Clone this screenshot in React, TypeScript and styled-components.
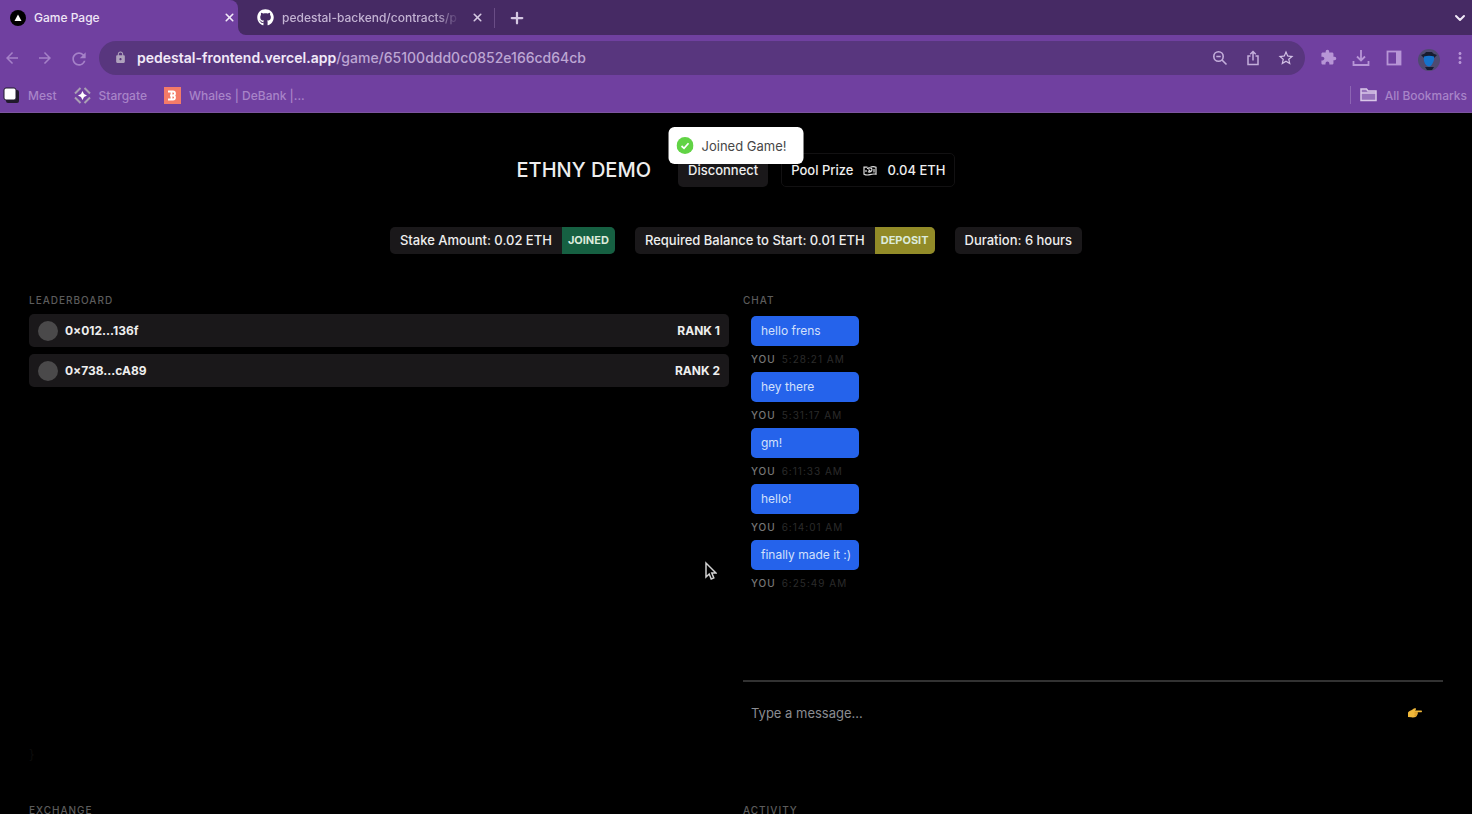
import React from "react";
import styled, { createGlobalStyle, css } from "styled-components";
import { LuChevronDown, LuPlus, LuX } from "react-icons/lu";
import {
  MdArrowBack,
  MdArrowForward,
  MdRefresh,
  MdLock,
  MdExtension,
  MdStarBorder,
  MdMoreVert,
} from "react-icons/md";
import { FaGithub } from "react-icons/fa";

const GlobalStyle = createGlobalStyle`
  *, *::before, *::after { box-sizing: border-box; }
  body {
    margin: 0;
    background: #000;
    color: #eee;
    font-family: Inter, "Liberation Sans", sans-serif;
    font-size: 13px;
  }
  button, input { font: inherit; color: inherit; }
  h1, h2, p, ol, ul { margin: 0; padding: 0; }
  ol, ul { list-style: none; }
`;

const Window = styled.div`
  display: flex;
  flex-direction: column;
  height: 100vh;
  overflow: hidden;
`;

/* Browser frame */

const TabStrip = styled.div`
  display: flex;
  align-items: stretch;
  height: 35px;
  background: #462a64;
`;

const Tab = styled.div<{ $active?: boolean }>`
  display: flex;
  align-items: center;
  gap: 8px;
  width: ${(p) => (p.$active ? 238 : 256)}px;
  padding: ${(p) => (p.$active ? "0 0 0 10px" : "0 8px 0 19px")};
  background: ${(p) => (p.$active ? "#7040a0" : "#462a64")};
  border-radius: ${(p) => (p.$active ? "0 8px 0 0" : "0 0 0 8px")};
  color: ${(p) => (p.$active ? "#efe6f6" : "#c3b3d3")};
  font-size: 12px;
  font-weight: 500;
`;

const TabCorner = styled.div`
  display: flex;
  background: #7040a0;
`;

const TabTitle = styled.span<{ $fade?: boolean }>`
  flex: 1;
  white-space: nowrap;
  ${(p) =>
    p.$fade &&
    css`
      mask-image: linear-gradient(to right, #000 86%, transparent);
    `}
`;

const IconButton = styled.button<{ $tone?: string }>`
  display: grid;
  place-items: center;
  flex: none;
  width: 18px;
  height: 18px;
  padding: 0;
  border: 0;
  background: none;
  color: ${(p) => p.$tone ?? "#b795d6"};
`;

const StripDivider = styled.span`
  align-self: center;
  width: 1px;
  height: 20px;
  margin-right: 13px;
  background: #6a4d86;
`;

const StripSpacer = styled.span`
  flex: 1;
`;

const StripEnd = styled.div`
  display: flex;
  align-items: center;
  padding-right: 3px;
`;

const Toolbar = styled.div`
  display: flex;
  align-items: center;
  gap: 12px;
  height: 45px;
  padding: 0 3px;
  background: #7040a0;
`;

const ToolGroup = styled.div`
  display: flex;
  align-items: center;
  gap: 15px;
`;

const AddressBar = styled.div`
  display: flex;
  align-items: center;
  flex: 1;
  min-width: 0;
  height: 34px;
  margin-right: 2px;
  padding: 0 10px 0 12px;
  border-radius: 17px;
  background: #58367e;
`;

const Address = styled.div`
  flex: 1;
  min-width: 0;
  overflow: hidden;
  padding-left: 8px;
  color: #bda6d3;
  font-size: 14px;
  font-weight: 500;
  white-space: nowrap;
`;

const Host = styled.span`
  color: #f1e9f8;
  font-weight: 600;
`;

const BookmarkBar = styled.nav`
  display: flex;
  align-items: center;
  gap: 17px;
  height: 33px;
  padding: 0 5px 2px 3px;
  border-bottom: 1px solid #7c559f;
  background: #7040a0;
`;

const Bookmark = styled.a`
  display: flex;
  align-items: center;
  gap: 8px;
  color: #a884c8;
  font-size: 12px;
  font-weight: 500;
  text-decoration: none;
`;

const BookmarkDivider = styled.span`
  width: 1px;
  height: 18px;
  margin-left: auto;
  margin-right: -8px;
  background: #8d65b3;
`;

/* Game page */

const Page = styled.main`
  flex: 1;
  min-height: 0;
  padding: 40px 29px 0;
  background: #000;
`;

const Header = styled.header`
  display: flex;
  align-items: center;
  justify-content: center;
  height: 34px;
`;

const Title = styled.h1`
  margin-right: 27px;
  font-size: 20px;
  font-weight: 500;
`;

const Disconnect = styled.button`
  height: 34px;
  margin-right: 13px;
  padding: 0 10px;
  border: 0;
  border-radius: 5px;
  background: #1a181a;
  font-weight: 500;
`;

const PoolPrize = styled.div`
  display: flex;
  align-items: center;
  gap: 10px;
  height: 34px;
  padding: 0 9px;
  border: 1px solid #121112;
  border-radius: 5px;
  font-weight: 500;
`;

const Facts = styled.div`
  display: flex;
  justify-content: center;
  gap: 20px;
  margin-top: 40px;
`;

const Fact = styled.div`
  display: flex;
  height: 27px;
  border-radius: 5px;
  background: #1a181a;
  line-height: 27px;
  font-weight: 500;
  overflow: hidden;
`;

const FactText = styled.span`
  padding: 0 10px;
`;

const FactAction = styled.button<{ $color: string }>`
  padding: 0 6px;
  border: 0;
  background: ${(p) => p.$color};
  color: #dcebdc;
  font-size: 11px;
  font-weight: 700;
`;

const Columns = styled.div`
  display: grid;
  grid-template-columns: 1fr 1fr;
  column-gap: 14px;
`;

const MainColumns = styled(Columns)`
  height: 510px;
  margin-top: 38px;
`;

const Panel = styled.section`
  display: flex;
  flex-direction: column;
`;

const PanelTitle = styled.h2`
  height: 16px;
  color: #5c5c5c;
  font-size: 10px;
  font-weight: 500;
  line-height: 16px;
  letter-spacing: 1px;
`;

const Ranking = styled.ol`
  display: grid;
  gap: 7px;
  margin-top: 6px;
`;

const Player = styled.li`
  display: flex;
  align-items: center;
  gap: 7px;
  height: 33px;
  padding: 0 9px;
  border-radius: 5px;
  background: #1a181a;
  font-size: 12px;
  font-weight: 700;
`;

const Avatar = styled.span`
  width: 20px;
  height: 20px;
  border-radius: 50%;
  background: #4a494a;
`;

const Rank = styled.span`
  margin-left: auto;
`;

const Stray = styled.p`
  margin-top: auto;
  padding-bottom: 40px;
  color: #0c0c0c;
`;

const Messages = styled.ul`
  display: flex;
  flex-direction: column;
  align-self: flex-start;
  height: 372px;
  padding: 8px 8px 0;
`;

const Bubble = styled.p`
  height: 30px;
  padding: 0 8px 0 10px;
  border-radius: 5px;
  background: #2563eb;
  color: #d3e0fb;
  font-size: 12px;
  line-height: 30px;
`;

const Meta = styled.p`
  display: flex;
  gap: 6px;
  height: 26px;
  color: #2b2b2b;
  font-size: 10px;
  line-height: 26px;
  letter-spacing: 1px;
`;

const Author = styled.span`
  color: #777;
  font-weight: 500;
`;

const Composer = styled.form`
  display: flex;
  align-items: center;
  height: 64px;
  padding: 0 19px 0 8px;
  border-top: 2px solid #323232;
`;

const MessageInput = styled.input`
  flex: 1;
  min-width: 0;
  padding: 0;
  border: 0;
  outline: 0;
  background: none;
  &::placeholder {
    color: #8a8c91;
    opacity: 1;
  }
`;

const Toast = styled.div`
  position: fixed;
  top: 127px;
  left: 50%;
  display: flex;
  align-items: center;
  gap: 8px;
  height: 37px;
  padding: 0 17px 0 8px;
  border-radius: 6px;
  background: #fff;
  color: #474747;
  transform: translateX(-50%);
`;

const Pointer = styled.svg`
  position: absolute;
  top: 561px;
  left: 703px;
`;

const stroke = { fill: "none", stroke: "currentColor" } as const;

const VercelIcon = () => (
  <svg width="16" height="16" viewBox="0 0 16 16">
    <circle cx="8" cy="8" r="8" fill="#000" />
    <path d="M8 4.500 11.500 11h-7z" fill="#fff" />
  </svg>
);

const MestIcon = () => (
  <svg width="17" height="17" viewBox="0 0 17 17">
    <rect x="3" y="3" width="13" height="13" rx="2" fill="#211a2c" />
    <rect x="1" y="1" width="12" height="12" rx="2" fill="#fff" stroke="#211a2c" />
  </svg>
);

const StargateIcon = () => (
  <svg width="17" height="17" viewBox="0 0 17 17">
    <path
      d="M1 6.500 6.500 1M10.500 1 16 6.500M16 10.500 10.500 16M6.500 16 1 10.500"
      stroke="#aaa0b4"
      strokeWidth="2"
      fill="none"
    />
    <path d="M8.500 4 10 7l3 1.500-3 1.500-1.500 3L7 10 4 8.500 7 7z" fill="#fff" />
  </svg>
);

const DebankIcon = () => (
  <svg width="17" height="17" viewBox="0 0 17 17">
    <rect width="17" height="17" fill="#f47b68" />
    <path
      d="M4 4.500h5a2 2 0 0 1 0 4H6M9 8.500a2 2 0 0 1 0 4H4M7.500 4.500v8"
      fill="none"
      stroke="#fff"
      strokeWidth="1.800"
    />
  </svg>
);

const ZoomOutIcon = () => (
  <svg width="16" height="16" viewBox="0 0 16 16" {...stroke} strokeWidth="1.600">
    <circle cx="6.500" cy="6.500" r="4.700" />
    <path d="m10 10 4.500 4.500M4.300 6.500h4.400" />
  </svg>
);

const ShareIcon = () => (
  <svg width="16" height="16" viewBox="0 0 16 16" {...stroke} strokeWidth="1.500">
    <path d="M5.500 6H3v8.500h10V6h-2.500M8 10.500V1.500M5.200 4.200 8 1.500l2.800 2.700" />
  </svg>
);

const DownloadIcon = () => (
  <svg width="18" height="18" viewBox="0 0 18 18" {...stroke} strokeWidth="1.800">
    <path d="M9 1v10M5 7.500l4 4 4-4M1.500 12v4h15v-4" />
  </svg>
);

const SidePanelIcon = () => (
  <svg width="16" height="16" viewBox="0 0 16 16">
    <rect x="1.500" y="1.500" width="13" height="13" {...stroke} strokeWidth="1.800" />
    <path d="M10 1h5v14h-5z" fill="currentColor" />
  </svg>
);

const ProfileIcon = () => (
  <svg width="22" height="22" viewBox="0 0 22 22">
    <circle cx="11" cy="11" r="11" fill="#4f4a70" />
    <path d="M3 6c2-1 4-1 5-3h6c1 2 3 2 5 3l-3 3H6zM7 18h9l-2 3H9z" fill="#171c30" />
    <path d="M6 7.500c3-1 7-1 10 0 .5 3-.5 5-1.500 7-1 2-2 3-3.500 3s-3-1-4-3-1.500-4-1-7z" fill="#1573cc" />
  </svg>
);

const FolderIcon = () => (
  <svg width="17" height="14" viewBox="0 0 17 14">
    <path d="M1 12.500V1h5.500l1.500 2h8v9.500z" fill="#9672bb" stroke="#d9c7e8" strokeWidth="1.500" />
    <path d="M1 5h15" stroke="#d9c7e8" strokeWidth="1.500" />
  </svg>
);

const MoneyIcon = () => (
  <svg width="14" height="11" viewBox="0 0 14 11" fill="none" stroke="#ddd" strokeWidth="1.200">
    <path d="M4.500 2.200H1v7c2 1 4 1 6 .4s4-.8 6-.4v-7c-1.500-.7-3.500-.8-5.500-.2" />
    <path d="M4.500 4c0-1.500 4.500-1.500 4.500.5S6.500 8 5 6.500M5.500 4.500l2 2M11 4v3.500M3 5v2" />
  </svg>
);

const SuccessIcon = () => (
  <svg width="17" height="17" viewBox="0 0 17 17">
    <circle cx="8.500" cy="8.500" r="8.500" fill="#61d345" />
    <path d="m5 9 2.500 2.300L12 6.200" fill="none" stroke="#fff" strokeWidth="1.700" />
  </svg>
);

const HandIcon = () => (
  <svg width="14" height="10" viewBox="0 0 14 10">
    <path
      d="M0 4.500C1 3 3 2.500 4.500 1.500 6 .3 7.500 0 8 .8c.3.600-.4 1.200-1 1.700h6c1.300 0 1.300 1.800 0 1.800H9.500c.6.700.4 1.300-.1 1.600.3.700 0 1.200-.5 1.400.1.800-.3 1.200-.9 1.300-.8 1-3 1-4.500.7L0 9z"
      fill="#f0b83a"
    />
    <path d="M9 4.300H6.500M9 6H6.500M8.500 7.500h-2" stroke="#c9851c" strokeWidth=".6" />
  </svg>
);

const players = ["0×012...136f", "0×738...cA89"];

const messages = [
  ["hello frens", "5:28:21 AM"],
  ["hey there", "5:31:17 AM"],
  ["gm!", "6:11:33 AM"],
  ["hello!", "6:14:01 AM"],
  ["finally made it :)", "6:25:49 AM"],
];

export default function App() {
  return (
    <Window>
      <GlobalStyle />
      <TabStrip>
        <Tab $active>
          <VercelIcon />
          <TabTitle>Game Page</TabTitle>
          <IconButton aria-label="Close Game Page" $tone="#f1e9f8">
            <LuX size={13} strokeWidth={3} />
          </IconButton>
        </Tab>
        <TabCorner>
          <Tab>
            <FaGithub size={17} color="#fff" />
            <TabTitle $fade>pedestal-backend/contracts/p</TabTitle>
            <IconButton aria-label="Close pedestal-backend" $tone="#d5c8e2">
              <LuX size={13} strokeWidth={3} />
            </IconButton>
          </Tab>
        </TabCorner>
        <StripDivider />
        <StripEnd>
          <IconButton aria-label="New tab" $tone="#d5c8e2">
            <LuPlus size={18} strokeWidth={3} />
          </IconButton>
        </StripEnd>
        <StripSpacer />
        <StripEnd>
          <IconButton aria-label="Search tabs" $tone="#f1e9f8">
            <LuChevronDown size={16} strokeWidth={3} />
          </IconButton>
        </StripEnd>
      </TabStrip>
      <Toolbar>
        <ToolGroup>
          <IconButton aria-label="Back" $tone="#a581c8">
            <MdArrowBack size={18} />
          </IconButton>
          <IconButton aria-label="Forward" $tone="#a581c8">
            <MdArrowForward size={18} />
          </IconButton>
          <IconButton aria-label="Reload" $tone="#a581c8">
            <MdRefresh size={20} />
          </IconButton>
        </ToolGroup>
        <AddressBar>
          <IconButton aria-label="Site information" $tone="#b0a3bd">
            <MdLock size={13} />
          </IconButton>
          <Address role="textbox" aria-label="Address">
            <Host>pedestal-frontend.vercel.app</Host>/game/65100ddd0c0852e166cd64cb
          </Address>
          <ToolGroup>
            <IconButton aria-label="Zoom" $tone="#c3aedb">
              <ZoomOutIcon />
            </IconButton>
            <IconButton aria-label="Share" $tone="#c3aedb">
              <ShareIcon />
            </IconButton>
            <IconButton aria-label="Bookmark this page" $tone="#d3c2e6">
              <MdStarBorder size={18} />
            </IconButton>
          </ToolGroup>
        </AddressBar>
        <ToolGroup>
          <IconButton aria-label="Extensions">
            <MdExtension size={17} />
          </IconButton>
          <IconButton aria-label="Downloads">
            <DownloadIcon />
          </IconButton>
          <IconButton aria-label="Side panel">
            <SidePanelIcon />
          </IconButton>
          <IconButton aria-label="Profile">
            <ProfileIcon />
          </IconButton>
          <IconButton aria-label="Menu">
            <MdMoreVert size={18} />
          </IconButton>
        </ToolGroup>
      </Toolbar>
      <BookmarkBar>
        <Bookmark href="#mest">
          <MestIcon />
          Mest
        </Bookmark>
        <Bookmark href="#stargate">
          <StargateIcon />
          Stargate
        </Bookmark>
        <Bookmark href="#debank">
          <DebankIcon />
          Whales | DeBank |...
        </Bookmark>
        <BookmarkDivider />
        <Bookmark href="#all">
          <FolderIcon />
          All Bookmarks
        </Bookmark>
      </BookmarkBar>

      <Page>
        <Header>
          <Title>ETHNY DEMO</Title>
          <Disconnect>Disconnect</Disconnect>
          <PoolPrize>
            Pool Prize
            <MoneyIcon />
            0.04 ETH
          </PoolPrize>
        </Header>
        <Facts>
          <Fact>
            <FactText>Stake Amount: 0.02 ETH</FactText>
            <FactAction $color="#166042">JOINED</FactAction>
          </Fact>
          <Fact>
            <FactText>Required Balance to Start: 0.01 ETH</FactText>
            <FactAction $color="#928b28">DEPOSIT</FactAction>
          </Fact>
          <Fact>
            <FactText>Duration: 6 hours</FactText>
          </Fact>
        </Facts>

        <MainColumns>
          <Panel>
            <PanelTitle>LEADERBOARD</PanelTitle>
            <Ranking>
              {players.map((name, i) => (
                <Player key={name}>
                  <Avatar />
                  {name}
                  <Rank>RANK {i + 1}</Rank>
                </Player>
              ))}
            </Ranking>
            <Stray>{"}"}</Stray>
          </Panel>
          <Panel>
            <PanelTitle>CHAT</PanelTitle>
            <Messages>
              {messages.map(([text, time]) => (
                <li key={time}>
                  <Bubble>{text}</Bubble>
                  <Meta>
                    <Author>YOU</Author>
                    {time}
                  </Meta>
                </li>
              ))}
            </Messages>
            <Composer onSubmit={(e) => e.preventDefault()}>
              <MessageInput aria-label="Message" placeholder="Type a message..." />
              <IconButton type="submit" aria-label="Send">
                <HandIcon />
              </IconButton>
            </Composer>
          </Panel>
        </MainColumns>
        <Columns>
          <PanelTitle>EXCHANGE</PanelTitle>
          <PanelTitle>ACTIVITY</PanelTitle>
        </Columns>
      </Page>

      <Toast role="status">
        <SuccessIcon />
        Joined Game!
      </Toast>
      <Pointer width="14" height="21" viewBox="0 0 14 21" aria-hidden="true">
        <path
          d="M3 2v14l3.200-3 2 5 2.600-1.100-2-4.900H13z"
          fill="#000"
          stroke="#d0d0d0"
          strokeWidth="1.500"
        />
      </Pointer>
    </Window>
  );
}
